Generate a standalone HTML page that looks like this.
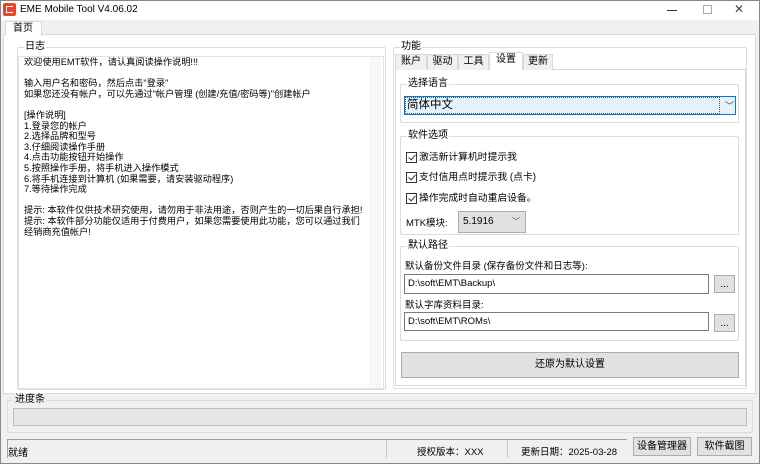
<!DOCTYPE html>
<html><head><meta charset="utf-8"><style>
*{margin:0;padding:0;box-sizing:border-box}
body{width:760px;height:464px;background:#f0f0f0;font-family:"Liberation Sans","Noto Sans CJK SC",sans-serif;font-size:11px;color:#000;position:relative;overflow:hidden}
.a{position:absolute}
.gb{position:absolute;border:1px solid #dcdcdc;border-radius:2px}
.gl{position:absolute;top:-8px;left:6px;padding:0 1px;background:inherit;line-height:14px;font-size:10px}
.btn{position:absolute;background:#e1e1e1;border:1px solid #adadad;text-align:center;font-size:10px}
.tb{position:absolute;background:#fff;border:1px solid #7a7a7a;padding-left:3px;font-size:9.5px;line-height:17px}
.tab{position:absolute;top:54px;height:16px;border:1px solid #d9d9d9;border-bottom:none;background:#f0f0f0;text-align:center;line-height:14px;font-size:10px}
.cb{position:absolute;left:406px;width:11px;height:11px;border:1px solid #333;background:#fff}
.cb:after{content:"";position:absolute;left:3px;top:0px;width:3px;height:6px;border:solid #333;border-width:0 1.3px 1.3px 0;transform:rotate(40deg)}
.ct{position:absolute;left:419px;font-size:9.8px;line-height:12px}
.sep{position:absolute;top:440px;width:1px;height:18px;background:#c8c8c8}
</style></head><body>
<div class="a" style="left:0;top:0;width:760px;height:20px;background:#fff"></div>
<div class="a" style="left:3px;top:3px;width:13px;height:13px;background:#e8452c;border-radius:2px"></div>
<div class="a" style="left:6px;top:6px;width:7px;height:7px;border:1.5px solid #fff;border-right:none"></div>
<div class="a" style="left:20px;top:4px;font-size:10px">EME Mobile Tool V4.06.02</div>
<div class="a" style="left:667px;top:10px;width:10px;height:1px;background:#333"></div>
<div class="a" style="left:703px;top:5px;width:9px;height:9px;border:1px solid #aaa"></div>
<div class="a" style="left:734px;top:2px;font-size:12px;color:#444">✕</div>
<div class="a" style="left:0;top:0;width:760px;height:464px;border:1px solid #888;pointer-events:none"></div>

<div class="a" style="left:3px;top:34px;width:753px;height:360px;background:#fff;border:1px solid #d9d9d9"></div>
<div class="a" style="left:5px;top:21px;width:37px;height:15px;background:#fff;border:1px solid #d9d9d9;border-bottom:none;line-height:14px;padding-left:7px;font-size:10px">首页</div>

<div class="gb" style="left:17px;top:47px;width:369px;height:343px;background:#fff"><span class="gl">日志</span></div>
<div class="a" style="left:18px;top:56px;width:366px;height:333px;background:#fff;border:1px solid #e3e3e3"></div>
<div class="a" style="left:369px;top:57px;width:12px;height:331px;background:#f7f7f7"></div>
<div class="a" style="left:24px;top:57px;font-size:9.2px;line-height:10.6px;white-space:pre">欢迎使用EMT软件，请认真阅读操作说明!!!

输入用户名和密码，然后点击"登录"
如果您还没有帐户，可以先通过"帐户管理 (创建/充值/密码等)"创建帐户

[操作说明]
1.登录您的帐户
2.选择品牌和型号
3.仔细阅读操作手册
4.点击功能按钮开始操作
5.按照操作手册，将手机进入操作模式
6.将手机连接到计算机 (如果需要，请安装驱动程序)
7.等待操作完成

提示: 本软件仅供技术研究使用，请勿用于非法用途，否则产生的一切后果自行承担!
提示: 本软件部分功能仅适用于付费用户，如果您需要使用此功能，您可以通过我们
经销商充值帐户!</div>

<div class="gb" style="left:393px;top:47px;width:354px;height:342px;background:#fff"><span class="gl">功能</span></div>
<div class="a" style="left:395px;top:69px;width:351px;height:317px;background:#fff;border:1px solid #d9d9d9"></div>
<div class="tab" style="left:395px;width:32px">账户</div>
<div class="tab" style="left:427px;width:31px">驱动</div>
<div class="tab" style="left:458px;width:31px">工具</div>
<div class="tab" style="left:489px;top:52px;height:18px;width:34px;background:#fff">设置</div>
<div class="tab" style="left:523px;width:30px">更新</div>

<div class="gb" style="left:400px;top:84px;width:339px;height:39px;background:#fff"><span class="gl">选择语言</span></div>
<div class="a" style="left:404px;top:96px;width:332px;height:19px;background:#e5f1fb;border:1px solid #0078d7;font-size:11.5px;line-height:16px;padding-left:2px">简体中文</div>
<div class="a" style="left:405px;top:97px;width:315px;height:17px;border:1px dotted #555"></div>
<div class="a" style="left:725px;top:99px;font-size:9px;color:#444">﹀</div>

<div class="gb" style="left:400px;top:136px;width:339px;height:99px;background:#fff"><span class="gl">软件选项</span></div>
<div class="cb" style="top:152px"></div><div class="ct" style="top:152px">激活新计算机时提示我</div>
<div class="cb" style="top:172px"></div><div class="ct" style="top:172px">支付信用点时提示我 (点卡)</div>
<div class="cb" style="top:193px"></div><div class="ct" style="top:193px">操作完成时自动重启设备。</div>
<div class="a" style="left:406px;top:215px;font-size:9.5px">MTK模块:</div>
<div class="a" style="left:458px;top:211px;width:68px;height:22px;background:#e1e1e1;border:1px solid #adadad;font-size:10px;line-height:20px;padding-left:4px">5.1916<span style="position:absolute;right:5px;top:0;font-size:8px;color:#444">﹀</span></div>

<div class="gb" style="left:400px;top:246px;width:339px;height:95px;background:#fff"><span class="gl">默认路径</span></div>
<div class="a" style="left:405px;top:258px;font-size:9.5px">默认备份文件目录 (保存备份文件和日志等):</div>
<div class="tb" style="left:404px;top:274px;width:305px;height:20px">D:\soft\EMT\Backup\</div>
<div class="btn" style="left:714px;top:275px;width:21px;height:18px;line-height:18px">...</div>
<div class="a" style="left:405px;top:297px;font-size:9.5px">默认字库资料目录:</div>
<div class="tb" style="left:404px;top:312px;width:305px;height:19px">D:\soft\EMT\ROMs\</div>
<div class="btn" style="left:714px;top:314px;width:21px;height:18px;line-height:18px">...</div>

<div class="btn" style="left:401px;top:352px;width:338px;height:26px;line-height:24px">还原为默认设置</div>

<div class="gb" style="left:7px;top:400px;width:746px;height:33px"><span class="gl" style="background:#f0f0f0">进度条</span></div>
<div class="a" style="left:13px;top:408px;width:734px;height:18px;background:#e6e6e6;border:1px solid #bcbcbc"></div>

<div class="a" style="left:7px;top:439px;width:620px;height:19px;border-top:1px solid #a0a0a0;border-left:1px solid #a0a0a0;background:#f0f0f0"></div>
<div class="a" style="left:8px;top:444px;font-size:10px">就绪</div>
<div class="sep" style="left:386px"></div>
<div class="a" style="left:417px;top:444px;font-size:9.5px">授权版本：XXX</div>
<div class="sep" style="left:507px"></div>
<div class="a" style="left:521px;top:444px;font-size:9.5px">更新日期：2025-03-28</div>
<div class="btn" style="left:633px;top:437px;width:58px;height:19px;line-height:17px">设备管理器</div>
<div class="btn" style="left:697px;top:437px;width:55px;height:19px;line-height:17px">软件截图</div>
</body></html>
